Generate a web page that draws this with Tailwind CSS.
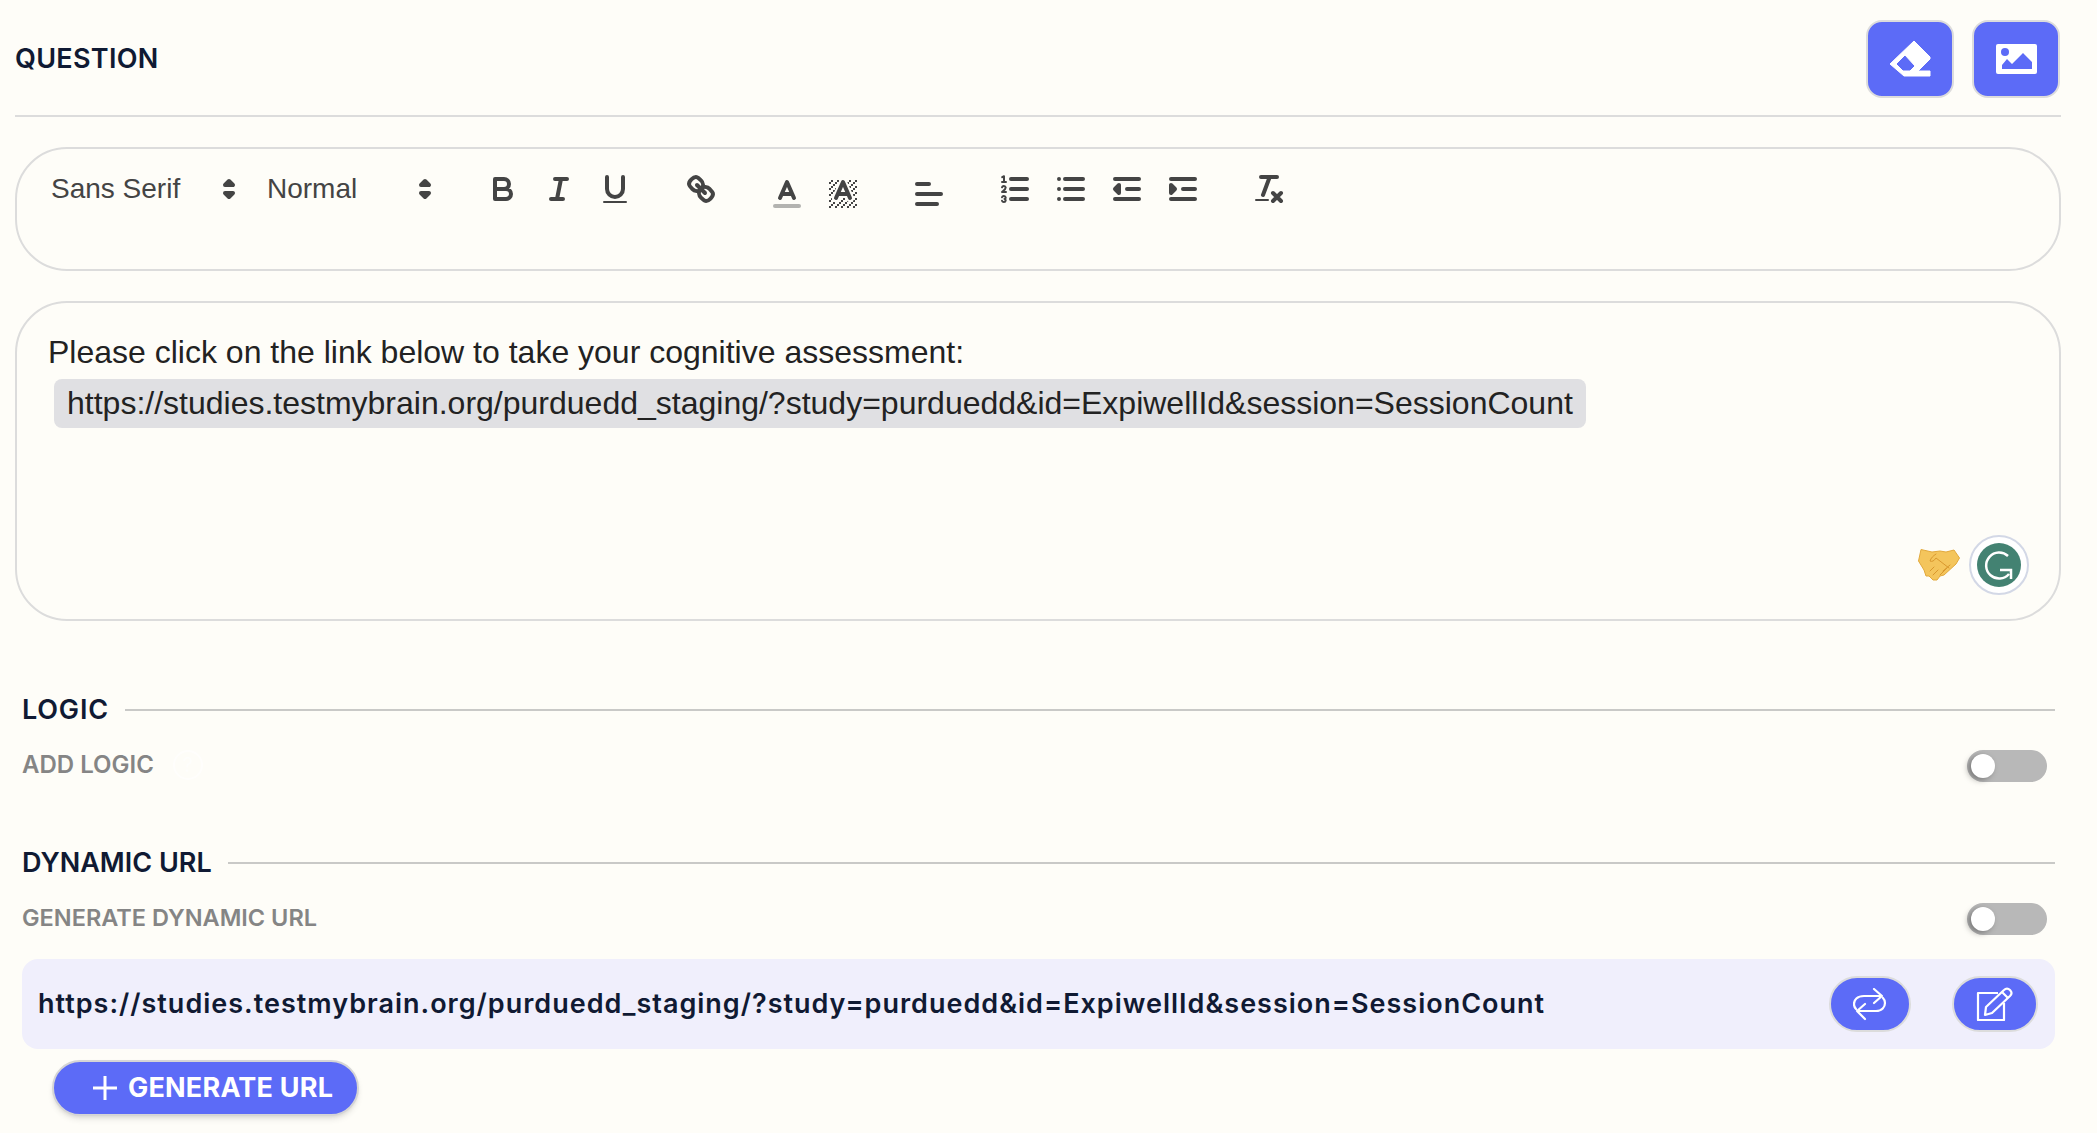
<!DOCTYPE html>
<html lang="en">
<head>
<meta charset="UTF-8">
<title>Question</title>
<script src="https://cdn.jsdelivr.net/npm/@tailwindcss/browser@4"></script>
</head>
<body class="bg-[#fefdf8] font-['Inter',sans-serif] text-[#101a33] overflow-hidden">
<div class="w-[2097px] h-[1133px]">
  <!-- question header -->
  <div class="ml-[15px] w-[2046px] h-[117px] border-b-2 border-[#dcdcdc] flex items-center justify-between">
    <h2 class="text-[27px] font-semibold tracking-[0.3px] mt-[3px]">QUESTION</h2>
    <div class="flex gap-[18px] mt-[2px] pr-[1px]">
      <button class="w-[88px] h-[78px] rounded-[16px] bg-[#5c6bf7] border-2 border-[#dcdcdc] flex items-center justify-center">
        <svg class="w-[42px] h-[37px]" viewBox="0 0 42 37"><path fill="#fff" stroke="#fff" stroke-linejoin="round" fill-rule="evenodd" d="M25 1 41 17V19L29 31H41V36H15L1 24ZM16 15 7 24 14 31H21L26 26Z"/></svg>
      </button>
      <button class="w-[88px] h-[78px] rounded-[16px] bg-[#5c6bf7] border-2 border-[#dcdcdc] flex items-center justify-center">
        <svg class="w-[41px] h-[30px]" viewBox="0 0 41 30"><rect width="41" height="30" rx="2" fill="#fff"/><circle cx="9" cy="8" r="4" fill="#5c6bf7"/><path d="M6 25V21L11 15 16 20 27 9 36 18V25Z" fill="#5c6bf7"/></svg>
      </button>
    </div>
  </div>

  <!-- toolbar -->
  <div class="ml-[15px] mt-[30px] w-[2046px] h-[124px] border-2 border-[#dcdcdc] rounded-[52px] pl-[35px] pt-[22px] flex items-start text-[#444] font-['Liberation_Sans',sans-serif]">
    <div class="w-[216px] pr-[21px] flex justify-between h-[36px] items-center text-[28px]">
      <span class="-ml-[1px]">Sans Serif</span>
      <svg class="w-[36px] h-[36px]" viewBox="0 0 18 18" fill="#444" stroke="#444" stroke-width="2" stroke-linejoin="round"><polygon points="7 11 9 13 11 11 7 11"/><polygon points="7 7 9 5 11 7 7 7"/></svg>
    </div>
    <div class="w-[207px] pr-[32px] flex justify-between h-[36px] items-center text-[28px]">
      <span class="-ml-[1px]">Normal</span>
      <svg class="w-[36px] h-[36px]" viewBox="0 0 18 18" fill="#444" stroke="#444" stroke-width="2" stroke-linejoin="round"><polygon points="7 11 9 13 11 11 7 11"/><polygon points="7 7 9 5 11 7 7 7"/></svg>
    </div>
    <div class="flex gap-[30px] items-start">
      <div class="flex">
        <span class="w-[56px] flex justify-center"><svg class="w-[36px] h-[36px]" viewBox="0 0 18 18" fill="none" stroke="#444" stroke-width="2" stroke-linecap="round" stroke-linejoin="round"><path d="M5 4H9.5A2.5 2.5 0 0 1 12 6.5V6.5A2.5 2.5 0 0 1 9.5 9H5ZM5 9H10.5A2.5 2.5 0 0 1 13 11.5V11.5A2.5 2.5 0 0 1 10.5 14H5Z"/></svg></span>
        <span class="w-[56px] flex justify-center"><svg class="w-[36px] h-[36px]" viewBox="0 0 18 18" fill="none" stroke="#444" stroke-width="2" stroke-linecap="round"><path d="M7 4H13M5 14H11M8 14 10 4"/></svg></span>
        <span class="w-[56px] flex justify-center"><svg class="w-[36px] h-[36px]" viewBox="0 0 18 18" fill="none" stroke="#444" stroke-width="2" stroke-linecap="round"><path d="M5 3V9A4 4 0 0 0 9 13H9A4 4 0 0 0 13 9V3"/><rect x="3" y="15" width="12" height="1" rx="0.5" fill="#444" stroke="none"/></svg></span>
      </div>
      <span class="w-[56px] flex justify-center"><svg class="w-[36px] h-[36px]" viewBox="0 0 18 18" fill="none" stroke="#444" stroke-width="2" stroke-linecap="round" stroke-linejoin="round"><path d="M7 7 11 11"/><path d="M8.9 4.577A3.476 3.476 0 0 1 9.26 9.256 3.476 3.476 0 0 1 4.577 8.9C3.185 7.5 2.035 6.4 4.217 4.217S7.5 3.185 8.9 4.577Z"/><path d="M13.423 9.1A3.476 3.476 0 0 0 8.744 8.74 3.476 3.476 0 0 0 9.104 13.419C10.496 14.811 11.604 15.961 13.783 13.779S14.815 10.5 13.423 9.1Z"/></svg></span>
      <div class="flex mt-[5px]">
        <span class="w-[56px] flex justify-center"><svg class="w-[36px] h-[36px]" viewBox="0 0 18 18" fill="none" stroke="#444" stroke-width="2" stroke-linecap="round" stroke-linejoin="round"><path d="M3 15H15" stroke="#b3b3b0"/><path d="M5.5 11 9 3 12.5 11M11.63 9H6.38"/></svg></span>
        <span class="w-[56px] flex justify-center"><svg class="w-[36px] h-[36px]" viewBox="0 0 18 18" fill="none" stroke-linecap="round" stroke-linejoin="round"><pattern id="hatch" width="3" height="3" patternUnits="userSpaceOnUse"><rect x="2" y="0" width="1" height="1" fill="#444"/><rect x="1" y="1" width="1" height="1" fill="#444"/><rect x="0" y="2" width="1" height="1" fill="#444"/></pattern><rect x="2" y="2" width="14" height="14" fill="url(#hatch)"/><path d="M5.5 11 9 3 12.5 11M11.63 9H6.38" stroke="#fefdf8" stroke-width="4"/><path d="M5.5 11 9 3 12.5 11M11.63 9H6.38" stroke="#444" stroke-width="2"/></svg></span>
      </div>
      <span class="w-[56px] flex justify-center mt-[5px]"><svg class="w-[36px] h-[36px]" viewBox="0 0 18 18" fill="none" stroke="#444" stroke-width="2" stroke-linecap="round"><path d="M3 4H9M3 9H15M3 14H13"/></svg></span>
      <div class="flex">
        <span class="w-[56px] flex justify-center"><svg class="w-[36px] h-[36px]" viewBox="0 0 18 18" fill="none" stroke="#444" stroke-linecap="round" stroke-linejoin="round"><path d="M7 4H15M7 9H15M7 14H15" stroke-width="2"/><path d="M2.5 5.5H4.5M3.5 5.5V2.6L2.6 3.1M4.5 10.5H2.5C2.5 10.27 4.35 9.42 4.35 8.27A.96.96 0 0 0 2.5 8.16M2.5 14.85A.96.96 0 0 0 4.35 14.74.7.7 0 0 0 3.75 14 .69.69 0 0 0 4.35 13.26.96.96 0 0 0 2.5 13.15" stroke-width="1"/></svg></span>
        <span class="w-[56px] flex justify-center"><svg class="w-[36px] h-[36px]" viewBox="0 0 18 18" fill="none" stroke="#444" stroke-width="2" stroke-linecap="round"><path d="M6 4H15M6 9H15M6 14H15M3 4H3M3 9H3M3 14H3"/></svg></span>
        <span class="w-[56px] flex justify-center"><svg class="w-[36px] h-[36px]" viewBox="0 0 18 18" fill="#444" stroke="#444" stroke-width="2" stroke-linecap="round" stroke-linejoin="round"><path d="M3 14H15M3 4H15M9 9H15"/><polygon points="5 7 5 11 3 9 5 7"/></svg></span>
        <span class="w-[56px] flex justify-center"><svg class="w-[36px] h-[36px]" viewBox="0 0 18 18" fill="#444" stroke="#444" stroke-width="2" stroke-linecap="round" stroke-linejoin="round"><path d="M3 14H15M3 4H15M9 9H15"/><polygon points="3 7 3 11 5 9 3 7"/></svg></span>
      </div>
      <span class="w-[56px] flex justify-center"><svg class="w-[36px] h-[36px]" viewBox="0 0 18 18" fill="none" stroke="#444" stroke-width="2" stroke-linecap="round"><path d="M5 3H13M6 12 9.35 3M11 11 15 15M15 11 11 15"/><rect x="2" y="14" width="7" height="1" rx="0.5" fill="#444" stroke="none"/></svg></span>
    </div>
  </div>

  <!-- editor -->
  <div class="relative ml-[15px] mt-[30px] w-[2046px] h-[320px] border-2 border-[#dcdcdc] rounded-[52px] pl-[31px] pt-[26px] font-['Liberation_Sans',sans-serif] text-[32px] text-[#222]">
    <p class="leading-[46px]">Please click on the link below to take your cognitive assessment:</p>
    <span class="inline-block ml-[6px] mt-[4px] px-[13px] h-[49px] leading-[48px] rounded-[8px] bg-[#e0e0e3]">https://studies.testmybrain.org/purduedd_staging/?study=purduedd&amp;id=ExpiwellId&amp;session=SessionCount</span>
    <div class="absolute right-[30px] bottom-[24px] flex items-center gap-[9px]">
      <svg class="w-[42px] h-[32px]" viewBox="0 0 42 32"><path d="M3 .5 14 3 22 2 28 3 36 1 41.5 9 38 15 26 26 22 27 19 31 15 31 11 27 8 27 6 21 .5 12Z" fill="#f4c55c" stroke="#e2a93c" stroke-linejoin="round"/><path d="M18 5C15 7 13 9 12 12 14 13 16 12 18 9L31 19M12 22 16 18M15 26 20 21M22 26 29 19M25 22 32 16" fill="none" stroke="#d9982e" stroke-linecap="round" stroke-linejoin="round"/></svg>
      <div class="w-[60px] h-[60px] rounded-full bg-white border-2 border-[#d3d8e6] flex items-center justify-center">
        <svg class="w-[44px] h-[44px]" viewBox="0 0 44 44" fill="none"><circle cx="22" cy="22" r="22" fill="#438272"/><path d="M31 13A13 13 0 1 0 32 31M23 27H34V36" stroke="#fff" stroke-width="2.5"/></svg>
      </div>
    </div>
  </div>

  <div class="ml-[22px] mr-[42px] mt-[69px]">
    <!-- logic -->
    <div class="flex items-center gap-[16px] h-[40px]">
      <h3 class="text-[27px] font-semibold tracking-[0.8px] mt-[1px]">LOGIC</h3>
      <div class="flex-1 h-[2px] bg-[#c9c9c7]"></div>
    </div>
    <div class="flex items-center justify-between h-[34px] mt-[17px]">
      <div class="flex items-center gap-[19px] mt-[2px]">
        <span class="text-[24px] font-semibold text-[#858585]">ADD LOGIC</span>
        <span class="w-[30px] h-[30px] rounded-full border-2 border-white/60 text-white/60 flex items-center justify-center text-[20px]">?</span>
      </div>
      <div class="w-[80px] h-[32px] mr-[8px] mt-[4px] rounded-full bg-[#b8b8b8] relative">
        <div class="absolute left-[4px] top-[4px] w-[24px] h-[24px] rounded-full bg-white shadow-[-3px_2px_6px_rgba(0,0,0,0.35)]"></div>
      </div>
    </div>
    <!-- dynamic url -->
    <div class="flex items-center gap-[16px] h-[40px] mt-[62px]">
      <h3 class="text-[27px] font-semibold mt-[1px]">DYNAMIC URL</h3>
      <div class="flex-1 h-[2px] bg-[#c9c9c7]"></div>
    </div>
    <div class="flex items-center justify-between h-[34px] mt-[17px]">
      <span class="text-[23.5px] font-semibold text-[#858585] mt-[2px]">GENERATE DYNAMIC URL</span>
      <div class="w-[80px] h-[32px] mr-[8px] mt-[4px] rounded-full bg-[#b8b8b8] relative">
        <div class="absolute left-[4px] top-[4px] w-[24px] h-[24px] rounded-full bg-white shadow-[-3px_2px_6px_rgba(0,0,0,0.35)]"></div>
      </div>
    </div>
    <div class="mt-[25px] h-[90px] rounded-[16px] bg-[#f0effc] pl-[16px] pr-[17px] flex items-center justify-between">
      <span class="text-[27px] font-semibold tracking-[1px]">https://studies.testmybrain.org/purduedd_staging/?study=purduedd&amp;id=ExpiwellId&amp;session=SessionCount</span>
      <div class="flex gap-[41px]">
        <button class="w-[82px] h-[56px] rounded-full bg-[#5c6bf7] border-2 border-[#dcdcdc] flex items-center justify-center">
          <svg class="w-[34px] h-[33px]" viewBox="0 0 34 33" fill="none" stroke="#fff" stroke-width="2.2" stroke-linecap="round" stroke-linejoin="round"><path d="M21 1 29 8 21 15M29 8H11C4 8 1 12 1 16 1 18 2 20 3 21M12 16 4 23 12 31M4 23H23C29 23 32 19 32 15 32 13 31 11 30 10"/></svg>
        </button>
        <button class="w-[86px] h-[56px] rounded-full bg-[#5c6bf7] border-2 border-[#dcdcdc] flex items-center justify-center">
          <svg class="w-[38px] h-[34px]" viewBox="0 0 38 34" fill="none" stroke="#fff" stroke-width="2.2" stroke-linejoin="round"><path d="M22 6H2V33H28V16"/><path d="M10 20 28 3C30 1 32 1 34 3 36 5 36 7 34 9L16 26 9 28Z"/><path d="M26 5 32 11"/></svg>
        </button>
      </div>
    </div>
    <button class="ml-[30px] mt-[11px] h-[56px] w-[307px] rounded-full bg-[#5c6bf7] border-2 border-[#d5d5d5] shadow-md text-white text-[27px] font-bold tracking-[0.2px] flex items-center pl-[38px] gap-[10px]">
      <svg class="w-[26px] h-[26px]" viewBox="0 0 26 26" stroke="#fff" stroke-width="3"><path d="M13 1V25M1 13H25"/></svg>
      GENERATE URL
    </button>
  </div>
</div>
</body>
</html>
